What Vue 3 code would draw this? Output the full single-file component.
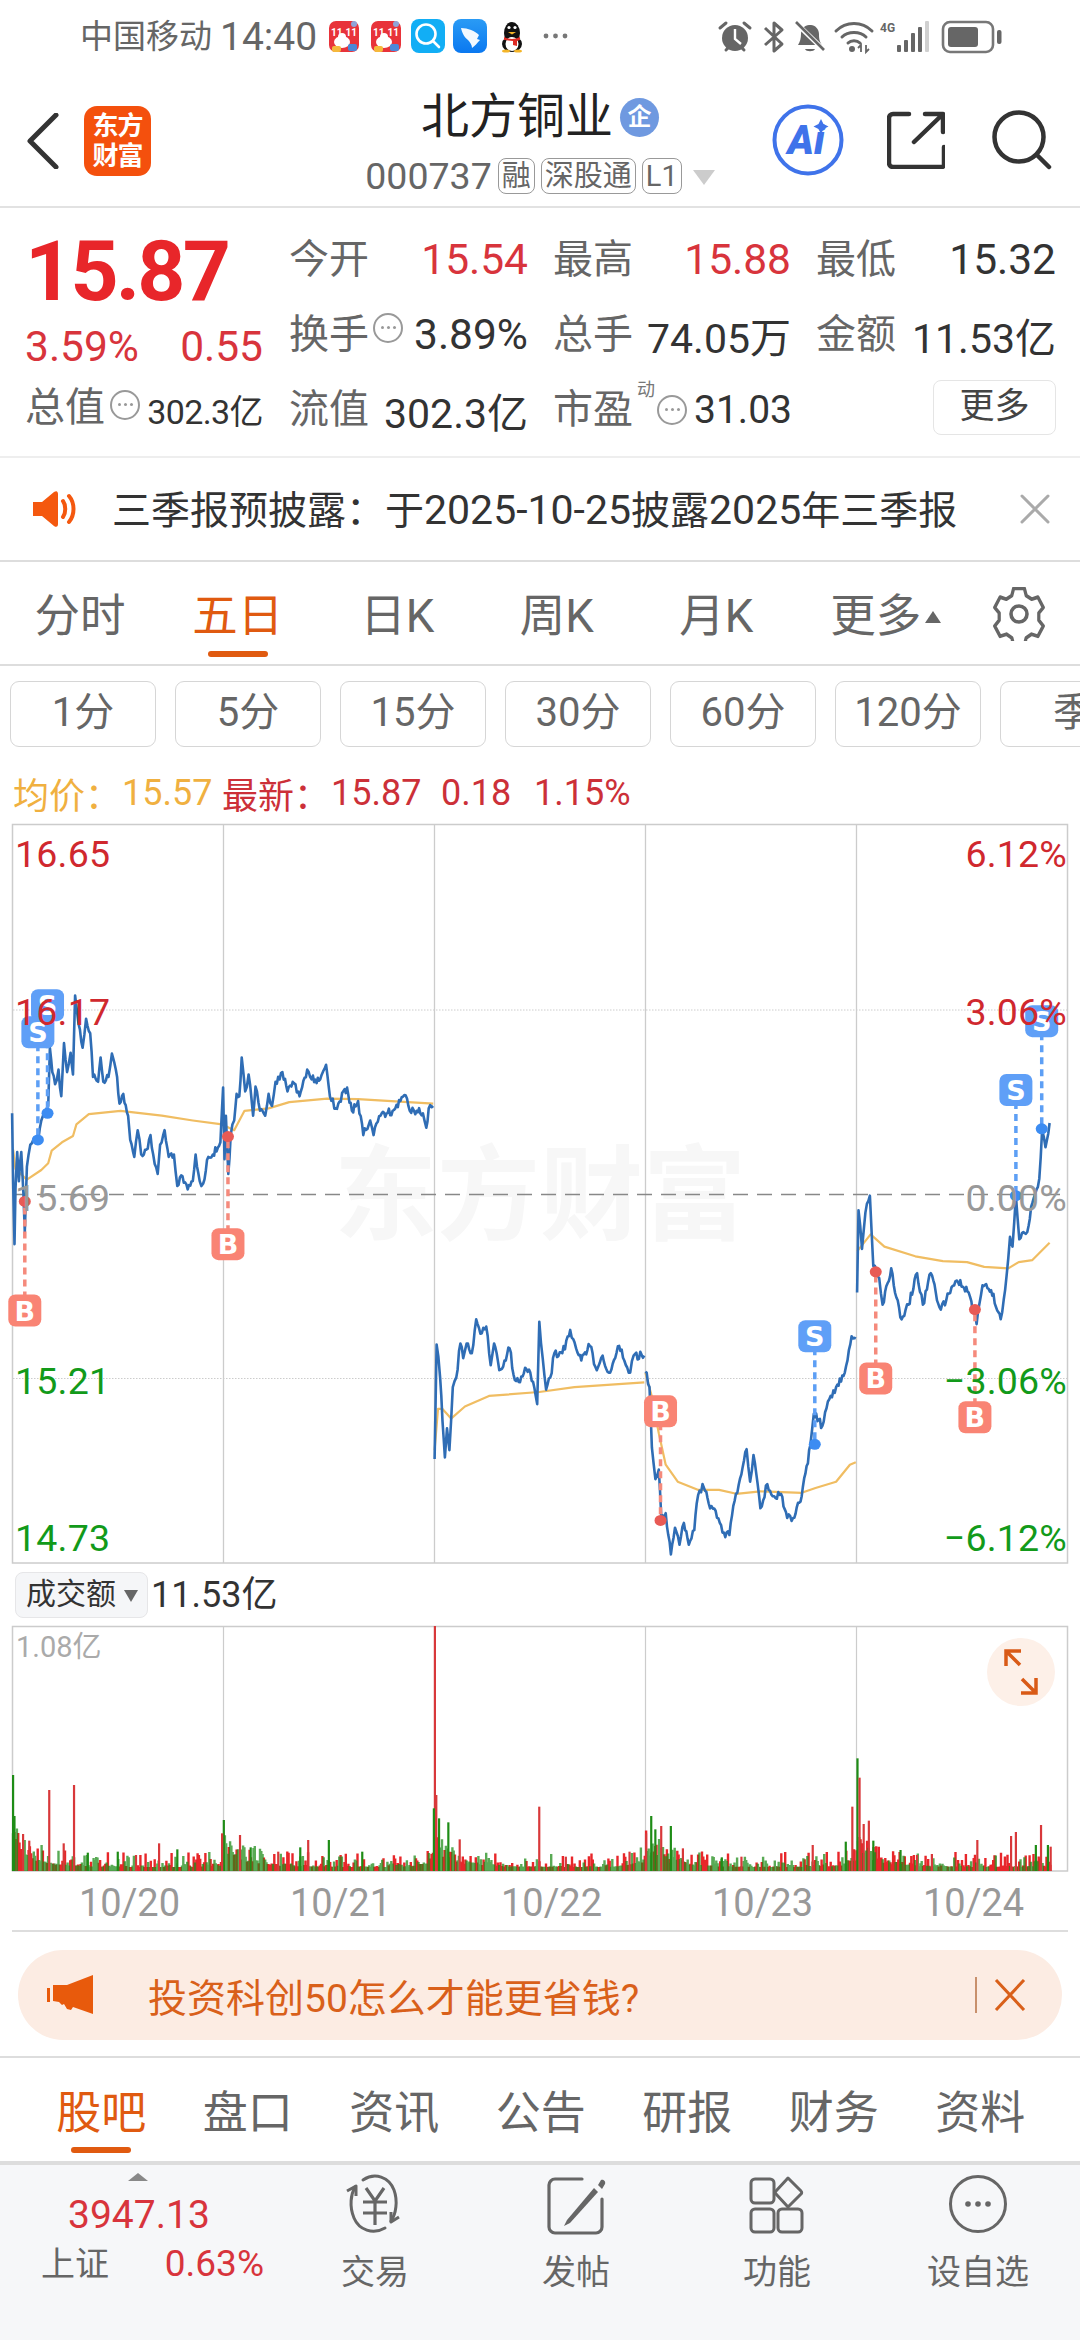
<script setup>
// Scale factors for the hand-plotted chart data (grid units to px)
const SX = 1 / 2.904
const SY = 1 / 2.063
const LEFT = 0
const RIGHT = 540

function seeded(seed) {
  let s = seed
  return () => {
    s = (s * 16807) % 2147483647
    return (s - 1) / 2147483646
  }
}

// Turns plotted anchor points into pixels; `off` is the x origin of the anchors.
function toPx(pts, off) {
  const out = []
  for (let i = 0; i < pts.length; i += 2) {
    out.push([pts[i] * SX + off, 820 + pts[i + 1] * SY])
  }
  return out
}

// Adds tick-level wobble between anchors so the trace reads like intraday data.
function jagged(points, seed, amp) {
  const r = seeded(seed)
  let d = ''
  points.forEach((p, i) => {
    if (i === 0) {
      d += `M${p[0].toFixed(1)} ${p[1].toFixed(1)}`
      return
    }
    const q = points[i - 1]
    const steps = Math.max(1, Math.floor((p[0] - q[0]) / 1.2))
    for (let k = 1; k <= steps; k++) {
      const t = k / steps
      const n = k === steps ? 0 : (r() - 0.5) * amp
      d += `L${(q[0] + (p[0] - q[0]) * t).toFixed(1)} ${(q[1] + (p[1] - q[1]) * t + n).toFixed(1)}`
    }
  })
  return d
}

function smooth(points) {
  return points.map((p, i) => `${i ? 'L' : 'M'}${p[0].toFixed(1)} ${p[1].toFixed(1)}`).join('')
}

const priceDays = [
  toPx([35,605,38,745,42,875,45,760,50,685,55,745,62,685,68,770,72,850,78,715,88,670,100,655,112,655,120,620,130,610,140,590,145,470,152,520,160,545,170,515,178,570,186,460,195,520,205,480,212,525,218,362,228,420,240,470,250,410,262,440,270,530,285,540,292,490,300,540,315,530,325,482,340,530,347,585,358,565,372,610,378,660,390,695,400,640,410,690,425,680,437,650,445,690,458,730,465,670,478,640,490,695,505,690,515,755,530,735,545,762,560,745,568,690,580,745,590,750,605,695,618,690,640,665,648,552,652,700,656,610,663,730,670,650,680,620,687,565,695,570,702,490,712,560,722,525,735,610,742,550,755,600,770,610,780,565,790,590,800,540,820,520,835,560,850,540,870,570,892,515,905,535,930,535,947,505,958,570,975,595,1008,552,1022,600,1040,580,1055,650,1075,620,1085,650,1105,610,1140,600,1178,568,1190,600,1210,600,1228,605,1238,635,1245,595,1258,590], LEFT),
  toPx([1262,1318,1268,1082,1278,1150,1285,1240,1292,1315,1298,1255,1305,1300,1315,1170,1325,1150,1337,1080,1345,1110,1355,1080,1370,1100,1383,1030,1395,1060,1412,1045,1425,1125,1435,1080,1450,1135,1465,1115,1480,1090,1495,1155,1510,1160,1525,1130,1540,1140,1560,1205,1566,1035,1576,1110,1586,1175,1598,1150,1610,1100,1633,1100,1656,1052,1673,1090,1688,1115,1713,1085,1733,1135,1750,1105,1768,1140,1798,1085,1813,1115,1830,1140,1840,1105,1871,1105], LEFT),
  toPx([306,1138,318,1170,325,1295,335,1360,345,1340,352,1435,365,1430,380,1515,392,1460,405,1495,418,1450,432,1495,448,1465,455,1410,472,1370,490,1410,510,1425,530,1470,550,1475,565,1405,585,1350,600,1298,610,1365,620,1310,640,1420,660,1370,680,1395,700,1390,718,1440,735,1440,760,1395,785,1290,795,1225,820,1250,840,1195,860,1170,885,1140,905,1065,917,1070], RIGHT),
  toPx([921,975,925,805,935,885,945,810,958,775,968,920,985,945,995,1000,1020,925,1035,985,1050,1030,1070,1000,1095,935,1112,1000,1135,935,1160,1005,1180,990,1210,950,1245,975,1268,1040,1285,960,1310,970,1338,1030,1355,940,1365,860,1372,880,1382,775,1392,865,1415,850,1430,790,1450,740,1458,640,1468,675,1480,625], RIGHT),
].map((p, i) => jagged(p, 71 + i * 13, 8))

const avgDays = [
  toPx([38,680,45,720,60,730,78,742,120,722,140,708,150,682,180,665,212,652,222,628,258,607,350,600,470,610,560,620,645,628,680,640,710,600,780,595,840,582,950,575,1040,576,1258,585], LEFT),
  toPx([1262,1300,1272,1215,1285,1215,1310,1235,1350,1210,1420,1188,1566,1180,1668,1170,1871,1160], LEFT),
  toPx([306,1140,325,1190,345,1265,365,1330,400,1365,460,1382,520,1382,570,1390,640,1385,760,1388,800,1378,860,1365,900,1330,917,1325], RIGHT),
  toPx([921,890,960,855,1000,880,1090,900,1170,910,1240,912,1290,922,1360,925,1390,912,1430,908,1480,872], RIGHT),
].map(smooth)

// Buy / sell flags: badge centre and the trade point it is pinned to
const flags = [
  { t: 'S', x: 138 * SX, by: 382, dy: 605 },
  { t: 'S', x: 110 * SX, by: 438, dy: 660 },
  { t: 'B', x: 72 * SX, by: 1012, dy: 787 },
  { t: 'B', x: 662 * SX, by: 875, dy: 653 },
  { t: 'B', x: 540 + 350 * SX, by: 1220, dy: 1445 },
  { t: 'S', x: 540 + 798 * SX, by: 1065, dy: 1288 },
  { t: 'B', x: 540 + 975 * SX, by: 1152, dy: 932 },
  { t: 'B', x: 540 + 1263 * SX, by: 1232, dy: 1010 },
  { t: 'S', x: 540 + 1382 * SX, by: 557, dy: 775 },
  { t: 'S', x: 540 + 1457 * SX, by: 415, dy: 637 },
].map(f => ({ ...f, badgeY: 820 + f.by * SY, dotY: 820 + f.dy * SY }))

const gridX = [223.5, 434.5, 645.5, 856.5]
const dayStarts = [13, 224, 435, 646, 857]

// Volume histogram: low random floor, heavier near each session's open and close
const VOL_BOTTOM = 1871
function volumeBars() {
  const r = seeded(4242)
  let red = ''
  let green = ''
  for (let x = 13; x < 1051; x += 1.3) {
    const day = dayStarts.filter(s => s <= x).pop()
    const since = x - day
    const untilEnd = day + 211 - x
    const heat = Math.exp(-since / 20) * 34 + Math.exp(-untilEnd / 9) * 16 * (day > 13 ? 1 : 0.3)
    const h = 4 + Math.pow(r(), 3) * 15 + heat * (0.4 + r() * 0.6)
    const seg = `M${x.toFixed(1)} ${VOL_BOTTOM}V${(VOL_BOTTOM - h).toFixed(1)}`
    if (r() > 0.5) red += seg
    else green += seg
  }
  return { red, green }
}
const volBase = volumeBars()

const spikeAt = (x, v, c) => ({ x, y: 1560 + v / 3, c })
const volSpikes = [
  [38,645,'g'],[42,768,'g'],[143,690,'r'],[215,675,'r'],[650,780,'g'],[645,820,'r'],[697,825,'r'],[895,840,'r'],[955,840,'g'],[1263,198,'r'],[1267,705,'r'],[1260,745,'g'],[1275,775,'g'],[1302,787,'g'],[1335,838,'r'],[462,850,'r'],[342,875,'g'],[515,868,'g'],[185,850,'r'],[67,822,'r'],[85,842,'r'],[1566,740,'r'],[872,862,'g'],[1052,875,'g'],[255,878,'g'],[395,885,'r'],[728,862,'g'],[808,875,'r'],
].map(s => spikeAt(s[0] * SX, s[1], s[2])).concat([
  [308,820,'r'],[323,768,'g'],[335,808,'g'],[352,798,'r'],[380,798,'g'],[415,865,'r'],[792,855,'r'],[907,740,'r'],[922,595,'g'],[928,653,'r'],[955,782,'r'],[940,792,'r'],[968,842,'g'],[1047,870,'g'],[1095,885,'r'],[1138,882,'r'],[1270,840,'r'],[1368,828,'r'],[1382,816,'r'],[1455,795,'r'],[1440,855,'g'],[1475,855,'g'],[1483,860,'r'],[888,845,'g'],[528,892,'g'],[260,875,'r'],[75,890,'r'],[585,890,'r'],
].map(s => spikeAt(540 + s[0] * SX, s[1], s[2])))

const chips = ['1分', '5分', '15分', '30分', '60分', '120分', '季']
const chartTabs = ['分时', '五日', '日K', '周K', '月K']
const dates = ['10/20', '10/21', '10/22', '10/23', '10/24']
const infoTabs = ['股吧', '盘口', '资讯', '公告', '研报', '财务', '资料']
</script>

<template>
  <div class="page">
    <!-- status bar -->
    <div class="status">
      <span class="carrier">中国移动</span>
      <span class="clock">14:40</span>
      <svg class="status-apps" width="245" height="50" viewBox="328 12 245 50">
        <defs>
          <linearGradient id="wing" x1="0" y1="0" x2="0" y2="1">
            <stop offset="0" stop-color="#2a9bf5" />
            <stop offset="1" stop-color="#0a78f0" />
          </linearGradient>
        </defs>
        <g v-for="ox in [329, 371]" :key="ox">
          <rect :x="ox" y="21" width="30" height="31" rx="7" fill="#e8333a" />
          <text :x="ox + 15" y="36" text-anchor="middle" class="app-mark">11.11</text>
          <ellipse :cx="ox + 13" cy="42" rx="8" ry="6" fill="#fff" />
          <circle :cx="ox + 13" cy="37" r="4" fill="#fff" />
          <rect :x="ox + 3" y="46" width="9" height="6" rx="2" fill="#f5b93c" />
          <rect :x="ox + 19" y="44" width="9" height="7" rx="2" fill="#4a88d8" />
          <circle :cx="ox + 25" cy="24" r="3" fill="#8fa4d8" />
        </g>
        <rect x="411" y="19" width="34" height="34" rx="8" fill="#12aef5" />
        <circle cx="426" cy="34" r="9.5" fill="none" stroke="#fff" stroke-width="2.6" />
        <path d="M433 41l6 6" stroke="#fff" stroke-width="2.6" stroke-linecap="round" />
        <rect x="453" y="19" width="34" height="34" rx="8" fill="url(#wing)" />
        <path d="M461 28c7 0 14 3 18 7l-2 4 3 1c-3 3-5 6-8 8 0-3-2-6-4-8-3-2-6-7-7-12z" fill="#fff" opacity=".95" />
        <ellipse cx="512" cy="33" rx="8" ry="11" fill="#111" />
        <ellipse cx="512" cy="44" rx="10" ry="8" fill="#111" />
        <ellipse cx="512" cy="44" rx="6.5" ry="7" fill="#fff" />
        <path d="M504 37c5 2.5 11 2.5 16 0v3l-3 1v5l-4-1v-4c-4 0-7-1-9-1z" fill="#dd2b24" />
        <path d="M508 32h8l-4 2.5z" fill="#f4b528" />
        <circle cx="509" cy="27.5" r="1.6" fill="#fff" />
        <circle cx="515" cy="27.5" r="1.6" fill="#fff" />
        <ellipse cx="506" cy="51" rx="4" ry="1.6" fill="#f4b528" />
        <ellipse cx="518" cy="51" rx="4" ry="1.6" fill="#f4b528" />
        <circle cx="546" cy="36" r="2.4" fill="#777" />
        <circle cx="555.5" cy="36" r="2.4" fill="#777" />
        <circle cx="565" cy="36" r="2.4" fill="#777" />
      </svg>
      <svg class="status-sys" width="290" height="50" viewBox="715 12 290 50">
        <!-- alarm -->
        <circle cx="735" cy="38" r="13" fill="#666" />
        <path d="M735 29v10l6 5" fill="none" stroke="#fff" stroke-width="2.4" />
        <path d="M720 28l6-5M750 28l-6-5M726 50l3-3M744 50l-3-3" stroke="#666" stroke-width="3" stroke-linecap="round" />
        <!-- bluetooth -->
        <path d="M765 28l17 16-8 7V23l8 7-17 15" fill="none" stroke="#666" stroke-width="3" stroke-linejoin="round" />
        <!-- muted bell -->
        <path d="M798 45h24c-3-4-3-8-3-11 0-5-4-9-8-9h-2c-4 0-8 4-8 9 0 4-1 8-3 11z" fill="#666" />
        <path d="M805 49h10c-1 3-9 3-10 0z" fill="#666" />
        <path d="M796 23l29 28" stroke="#fff" stroke-width="5" />
        <path d="M796 22l28 28" stroke="#666" stroke-width="2.6" />
        <!-- wifi -->
        <path d="M836 31c10-10 26-10 36 0M842 37c6-6 18-6 24 0M848 43c3-3 9-3 12 0" fill="none" stroke="#666" stroke-width="3" stroke-linecap="round" />
        <circle cx="852" cy="49" r="3" fill="#666" />
        <path d="M861 52v-7l-3 3M866 45v7l3-3" fill="none" stroke="#666" stroke-width="1.8" />
        <!-- signal -->
        <text x="880" y="32" class="net">4G</text>
        <rect x="897" y="45" width="4" height="7" rx="1" fill="#666" />
        <rect x="904" y="40" width="4" height="12" rx="1" fill="#666" />
        <rect x="911" y="33" width="4" height="19" rx="1" fill="#666" />
        <rect x="918" y="27" width="4" height="25" rx="1" fill="#666" />
        <rect x="925" y="21" width="4" height="31" rx="1" fill="#d0d0d0" />
        <!-- battery -->
        <rect x="943" y="22" width="50" height="30" rx="7" fill="none" stroke="#777" stroke-width="2.6" />
        <rect x="948" y="27" width="30" height="20" rx="3" fill="#666" />
        <rect x="997" y="30" width="4.5" height="14" rx="2" fill="#666" />
      </svg>
    </div>

    <!-- stock title bar -->
    <header class="nav">
      <div class="nav-left">
        <svg class="back" width="32" height="56" viewBox="0 0 32 56"><path d="M29 2L3 28l26 26" fill="none" stroke="#333" stroke-width="5" stroke-linecap="round" stroke-linejoin="round" /></svg>
        <div class="logo"><span>东方</span><span>财富</span></div>
      </div>
      <div class="nav-mid">
        <div class="title-row">
          <span class="title">北方铜业</span>
          <span class="ent">企</span>
        </div>
        <div class="code-row">
          <span class="code">000737</span>
          <span class="tag">融</span>
          <span class="tag">深股通</span>
          <span class="tag">L1</span>
          <i class="caret"></i>
        </div>
      </div>
      <div class="nav-right">
        <svg width="72" height="72" viewBox="0 0 72 72">
          <circle cx="36" cy="36" r="33.5" fill="none" stroke="#3f73ea" stroke-width="4" />
          <text x="34" y="50" text-anchor="middle" class="ai">Ai</text>
          <path d="M49 15l2.5 5 5 2.500-5 2.500-2.500 5-2.500-5-5-2.500 5-2.500z" fill="#3f73ea" />
        </svg>
        <svg class="ic-share" width="58" height="58" viewBox="0 0 58 58" fill="none" stroke="#333" stroke-width="4.500" stroke-linecap="round" stroke-linejoin="round">
          <path d="M22 3H6a4 4 0 0 0-4 4v45a4 4 0 0 0 4 4h49a2 2 0 0 0 2-2V36" />
          <path d="M27 31L55 4M38 3h18v18" />
        </svg>
        <svg class="ic-search" width="60" height="60" viewBox="0 0 60 60" fill="none" stroke="#333" stroke-width="4.500" stroke-linecap="round">
          <circle cx="27" cy="27" r="24.500" />
          <path d="M45 45l12 12" />
        </svg>
      </div>
    </header>

    <!-- quote summary -->
    <section class="quote">
      <div class="q-left">
        <div class="price">15.87</div>
        <div class="change"><span>3.59%</span><span>0.55</span></div>
        <div class="cap"><span class="lab">总值</span><i class="more-dot"><b></b></i><span class="cap-val">302.3亿</span></div>
      </div>
      <div class="q-grid">
        <div class="cell"><span class="lab">今开</span><span class="val up">15.54</span></div>
        <div class="cell"><span class="lab">最高</span><span class="val up">15.88</span></div>
        <div class="cell"><span class="lab">最低</span><span class="val">15.32</span></div>
        <div class="cell"><span class="lab">换手</span><i class="more-dot lift"><b></b></i><span class="val">3.89%</span></div>
        <div class="cell"><span class="lab">总手</span><span class="val unit">74.05万</span></div>
        <div class="cell"><span class="lab">金额</span><span class="val unit">11.53亿</span></div>
        <div class="cell"><span class="lab">流值</span><span class="val unit">302.3亿</span></div>
        <div class="cell"><span class="lab">市盈<sup>动</sup></span><i class="more-dot pe"><b></b></i><span class="val small">31.03</span></div>
        <div class="cell end"><span class="more-btn">更多</span></div>
      </div>
    </section>

    <!-- announcement -->
    <div class="notice">
      <svg width="46" height="36" viewBox="0 0 46 36" fill="#f4580f">
        <path d="M0 11h9L21 1c3-2 4 0 4 2v30c0 2-1 4-4 2L9 25H0z" />
        <path d="M30 10c3 4 3 12 0 16M36 5c6 7 6 19 0 26" fill="none" stroke="#f4580f" stroke-width="4" stroke-linecap="round" />
      </svg>
      <span class="notice-text">三季报预披露：于<span class="num">2025-10-25</span>披露<span class="num">2025</span>年三季报</span>
      <svg class="notice-x" width="30" height="30" viewBox="0 0 30 30"><path d="M2 2l26 26M28 2L2 28" stroke="#aaa" stroke-width="3" stroke-linecap="round" /></svg>
    </div>

    <!-- period tabs -->
    <nav class="period">
      <div v-for="(t, i) in chartTabs" :key="t" class="ptab" :class="{ on: i === 1 }">
        <span>{{ t }}</span><i></i>
      </div>
      <div class="ptab"><span class="more-tab">更多<em></em></span><i></i></div>
      <div class="ptab gear">
        <svg width="54" height="54" viewBox="0 0 54 54" fill="none" stroke="#666" stroke-width="3.600" stroke-linejoin="round">
          <path d="M21 3h12l2 7 6 3.500 7-2 6 10-5 5.500v7l5 5.500-6 10-7-2-6 3.500-2 7H21l-2-7-6-3.500-7 2-6-10 5-5.500v-7L0 21.500l6-10 7 2L19 10z" transform="translate(2.700 -1.700) scale(.9 1.03)" />
          <circle cx="27" cy="27" r="8" />
        </svg>
      </div>
    </nav>

    <div class="chips">
      <span v-for="c in chips" :key="c" class="chip">{{ c }}</span>
    </div>

    <div class="legend">
      <span class="gold l1">均价：</span><span class="gold l2">15.57</span>
      <span class="red l3">最新：</span><span class="red l4">15.87</span>
      <span class="red l5">0.18</span><span class="red l6">1.15%</span>
    </div>

    <!-- price chart -->
    <svg class="chart" width="1080" height="748" viewBox="0 820 1080 748">
      <text x="540" y="1232" text-anchor="middle" class="mark">东方财富</text>
      <rect x="12.500" y="824.500" width="1055" height="738.500" fill="none" stroke="#ccc" stroke-width="1.500" />
      <path v-for="x in gridX" :key="x" :d="`M${x} 825V1563`" stroke="#ccc" stroke-width="1.300" />
      <path d="M13 1010H1067M13 1378.500H1067" stroke="#ccc" stroke-width="1" stroke-dasharray="1.500 1.500" />
      <path d="M13 1194.500H1067" stroke="#888" stroke-width="1.600" stroke-dasharray="15 9" />
      <path v-for="(d, i) in avgDays" :key="'a' + i" :d="d" class="avg" />
      <path v-for="(d, i) in priceDays" :key="'p' + i" :d="d" class="line" />
      <g v-for="(f, i) in flags" :key="'f' + i">
        <path :d="`M${f.x} ${f.badgeY}V${f.dotY}`" :stroke="f.t === 'B' ? '#f58a7c' : '#5d9ff5'" stroke-width="3.500" stroke-dasharray="7 5" />
        <ellipse :cx="f.x" :cy="f.dotY" rx="6" ry="5.500" :fill="f.t === 'B' ? '#e85a55' : '#3c8cf2'" />
        <rect :x="f.x - 16.500" :y="f.badgeY - 16" width="33" height="32" rx="7" :fill="f.t === 'B' ? '#f98474' : '#5f9ff7'" />
        <text :x="f.x" :y="f.badgeY + 10" text-anchor="middle" class="flag">{{ f.t }}</text>
      </g>
      <text x="15" y="867" class="axis" fill="#d0282e">16.65</text>
      <text x="15" y="1025" class="axis" fill="#d0282e">16.17</text>
      <text x="15" y="1211" class="axis" fill="#999">15.69</text>
      <text x="15" y="1394" class="axis" fill="#129a1a">15.21</text>
      <text x="15" y="1551" class="axis" fill="#129a1a">14.73</text>
      <text x="1067" y="867" text-anchor="end" class="axis" fill="#d0282e">6.12%</text>
      <text x="1067" y="1025" text-anchor="end" class="axis" fill="#d0282e">3.06%</text>
      <text x="1067" y="1211" text-anchor="end" class="axis" fill="#999">0.00%</text>
      <text x="1067" y="1394" text-anchor="end" class="axis" fill="#129a1a">−3.06%</text>
      <text x="1067" y="1551" text-anchor="end" class="axis" fill="#129a1a">−6.12%</text>
    </svg>

    <!-- turnover -->
    <div class="vol-head">
      <span class="vol-chip">成交额<i></i></span>
      <span class="vol-total">11.53亿</span>
    </div>
    <svg class="vol" width="1080" height="254" viewBox="0 1622 1080 254">
      <rect x="12.500" y="1626.500" width="1055" height="244.500" fill="none" stroke="#ccc" stroke-width="1.500" />
      <path v-for="x in gridX" :key="x" :d="`M${x} 1626V1871`" stroke="#ccc" stroke-width="1.200" />
      <text x="16" y="1657" class="vol-max">1.08亿</text>
      <path :d="volBase.red" stroke="#e8262a" stroke-width="2.400" />
      <path :d="volBase.green" stroke="#1a8a14" stroke-width="2.400" opacity=".72" />
      <path v-for="(s, i) in volSpikes" :key="'s' + i" :d="`M${s.x} 1871V${s.y}`" :stroke="s.c === 'r' ? '#d8383a' : '#1e8c16'" stroke-width="2.200" />
      <circle cx="1021" cy="1672" r="34" fill="#fdf0e8" />
      <path d="M1006 1666v-15h15M1007 1652l13 13M1036 1678v15h-15M1035 1692l-13-13" fill="none" stroke="#d95a16" stroke-width="3.500" />
    </svg>
    <div class="dates">
      <span v-for="d in dates" :key="d">{{ d }}</span>
    </div>

    <!-- promotion -->
    <div class="promo-wrap">
      <div class="promo">
        <svg width="48" height="40" viewBox="0 0 48 40" fill="#e85a0c">
          <rect x="0" y="13" width="3" height="14" />
          <path d="M6 10h14L46 0v39l-20-7-2 3-4-1-3-5-2 1-3-3-6-1z" />
        </svg>
        <span class="promo-text">投资科创50怎么才能更省钱?</span>
        <i class="promo-bar"></i>
        <svg width="32" height="32" viewBox="0 0 32 32"><path d="M2 1l28 30M30 1L2 31" stroke="#d9601a" stroke-width="3" /></svg>
      </div>
    </div>

    <!-- content tabs -->
    <nav class="itabs">
      <div v-for="(t, i) in infoTabs" :key="t" class="itab" :class="{ on: i === 0 }">
        <span>{{ t }}</span><i></i>
      </div>
    </nav>

    <!-- bottom action bar -->
    <footer class="bar">
      <div class="index">
        <i class="idx-up"></i>
        <div class="idx-val">3947.13</div>
        <div class="idx-row"><span>上证</span><span class="idx-pct">0.63%</span></div>
      </div>
      <div class="act">
        <svg width="68" height="64" viewBox="0 0 68 64" fill="none" stroke="#666" stroke-width="3">
          <path d="M22 8c12-8 26-3 31 10 4 11 2 24-3 31" stroke-linecap="round" />
          <path d="M50 40l0 10 8-5" stroke-width="3" stroke-linejoin="round" />
          <path d="M44 56c-12 7-26 2-31-10-5-12-3-24 1-31" stroke-linecap="round" />
          <path d="M6 19l9-5 0 10" stroke-width="3" stroke-linejoin="round" />
          <path d="M25 16l9 13 9-13M22 30h24M22 41h24M34 29v24" stroke-width="3.200" />
        </svg>
        <span>交易</span>
      </div>
      <div class="act">
        <svg width="60" height="64" viewBox="0 0 60 64" fill="none" stroke="#666" stroke-width="3.200">
          <path d="M36 7H9a6 6 0 0 0-6 6v42a6 6 0 0 0 6 6h41a6 6 0 0 0 6-6V27" stroke-linecap="round" />
          <path d="M48 16L21 48l-3 6 6-3L52 20z" fill="#666" stroke="none" />
          <path d="M52 13l3-5c2-1 5 1 4 4l-3 5z" fill="#666" stroke="none" />
        </svg>
        <span>发帖</span>
      </div>
      <div class="act">
        <svg width="56" height="64" viewBox="0 0 56 64" fill="none" stroke="#666" stroke-width="3">
          <rect x="2" y="7" width="23" height="24" rx="4" />
          <path d="M39 6l13 13a2 2 0 0 1 0 3L39 35 27 22a2 2 0 0 1 0-3z" stroke-linejoin="round" />
          <rect x="2" y="37" width="23" height="23" rx="4" />
          <rect x="29" y="37" width="24" height="23" rx="4" />
        </svg>
        <span>功能</span>
      </div>
      <div class="act">
        <svg width="60" height="64" viewBox="0 0 60 64" fill="none" stroke="#666" stroke-width="3">
          <circle cx="30" cy="32" r="27.500" />
          <circle cx="20" cy="32" r="2.800" fill="#666" stroke="none" />
          <circle cx="30" cy="32" r="2.800" fill="#666" stroke="none" />
          <circle cx="40" cy="32" r="2.800" fill="#666" stroke="none" />
        </svg>
        <span>设自选</span>
      </div>
    </footer>
  </div>
</template>

<style>
html, body { background: #fff; }
</style>

<style scoped>
.page {
  width: 1080px;
  height: 2340px;
  overflow: hidden;
  background: #fff;
  font-family: Roboto, "Noto Sans CJK SC", sans-serif;
  color: #333;
  display: flex;
  flex-direction: column;
}
svg { display: block; flex: none; }
i { display: block; font-style: normal; }

/* status bar */
.status { height: 74px; display: flex; align-items: center; padding-left: 80px; color: #666; flex: none; }
.carrier { font-size: 33px; line-height: 40px; }
.clock { font-size: 39px; line-height: 40px; margin-left: 8px; width: 98px; }
.status-apps { margin-left: 10px; }
.status-sys { margin-left: 142px; }
.app-mark { font: 700 10px Roboto, sans-serif; fill: #fff; }
.net { font: 700 12px Roboto, sans-serif; fill: #666; }

/* title bar */
.nav { height: 134px; flex: none; display: grid; grid-template-columns: 1fr auto 1fr; border-bottom: 2px solid #e2e2e2; box-sizing: border-box; }
.nav-left { display: flex; align-items: center; padding-left: 27px; }
.back { margin-top: 1px; }
.logo { width: 67px; height: 70px; margin-left: 25px; margin-top: 1px; background: #f4500d; border-radius: 13px; color: #fff; font-size: 26px; line-height: 30px; font-weight: 700; display: flex; flex-direction: column; align-items: center; justify-content: center; letter-spacing: -1px; }
.nav-mid { display: flex; flex-direction: column; align-items: center; padding-top: 19px; }
.title-row { display: flex; align-items: center; height: 48px; }
.title { font-size: 48px; line-height: 48px; color: #222; }
.ent { width: 39px; height: 39px; margin-left: 7px; border-radius: 50%; background: #6f99e0; color: #fff; font-size: 24px; line-height: 39px; text-align: center; font-weight: 700; }
.code-row { display: flex; align-items: center; margin-top: 16px; height: 38px; color: #666; }
.code { font-size: 37.500px; line-height: 38px; }
.tag { border: 1.500px solid #999; border-radius: 8px; height: 36px; line-height: 34px; font-size: 29px; padding: 0 3px; margin-left: 6px; box-sizing: border-box; }
.caret { width: 0; height: 0; margin-left: 11px; border-left: 11px solid transparent; border-right: 11px solid transparent; border-top: 15px solid #ccc; margin-top: 2px; }
.nav-right { display: flex; align-items: center; justify-content: flex-end; padding-right: 28px; }
.ic-share { margin-left: 43px; }
.ic-search { margin-left: 47px; }
.ai { font: italic 900 40px Roboto, sans-serif; fill: #3f73ea; }

/* quote */
.quote { height: 250px; flex: none; box-sizing: border-box; border-bottom: 2px solid #eee; display: flex; padding-top: 14px; }
.q-left { width: 289px; flex: none; padding-left: 25px; box-sizing: border-box; }
.price { height: 100px; line-height: 100px; font-size: 84px; font-weight: 700; color: #e8262a; letter-spacing: -2.800px; }
.change { height: 48px; width: 238px; display: flex; justify-content: space-between; align-items: center; color: #d8343c; font-size: 42.500px; }
.cap { height: 76px; width: 238px; display: flex; align-items: center; }
.cap-val { font-size: 34px; margin-left: auto; margin-top: 2px; color: #333; white-space: nowrap; letter-spacing: -.6px; }
.lab { font-size: 40px; color: #666; line-height: 50px; position: relative; white-space: nowrap; }
.lab sup { position: absolute; left: 84px; top: -5px; font-size: 18px; line-height: 20px; color: #777; }
.q-grid { display: grid; grid-template-columns: 239px 238px 240px; grid-auto-rows: 75px; column-gap: 25px; }
.cell { display: flex; align-items: center; justify-content: space-between; }
.cell.end { justify-content: flex-end; }
.val { font-size: 42.500px; color: #333; white-space: nowrap; }
.val.unit { font-size: 41px; }
.val.small { font-size: 39px; margin-right: -1px; }
.up { color: #d8343c; }
.more-dot { width: 30px; height: 30px; flex: none; border: 2px solid #999; border-radius: 50%; box-sizing: border-box; position: relative; margin-left: 5px; margin-top: -6px; }
.more-dot.lift { margin-top: -14px; margin-left: 4px; }
.more-dot.pe { margin-left: 24px; margin-top: 0; }
.more-dot b { position: absolute; left: 6px; top: 11px; width: 3px; height: 3px; border-radius: 50%; background: #999; box-shadow: 6px 0 #999, 12px 0 #999; }
.cell .more-dot { margin-right: auto; }
.more-btn { width: 123px; height: 55px; border: 1.500px solid #e5e5e5; border-radius: 8px; box-sizing: border-box; text-align: center; line-height: 52px; font-size: 35px; color: #444; margin-top: -4px; }

/* notice */
.notice { height: 104px; flex: none; box-sizing: border-box; border-bottom: 2px solid #ddd; display: flex; align-items: center; padding-left: 33px; }
.notice-text { font-size: 39px; color: #333; margin: -4px 0 0 33px; white-space: nowrap; flex: none; width: 908px; }
.num { font-size: 41px; }

/* period tabs */
.period { height: 104px; flex: none; box-sizing: border-box; border-bottom: 2px solid #ddd; display: grid; grid-template-columns: 156px repeat(5, 159.500px) 1fr; padding: 25px 0 0 2px; }
.ptab { display: flex; flex-direction: column; align-items: center; font-size: 45.500px; line-height: 60px; color: #666; }
.ptab i { width: 60px; height: 6px; margin-top: 4px; border-radius: 3px; }
.ptab.on { color: #e05a10; }
.ptab.on i { background: #e05a10; }
.more-tab { position: relative; }
.more-tab em { position: absolute; left: 95px; top: 24px; width: 0; height: 0; border-left: 8px solid transparent; border-right: 8px solid transparent; border-bottom: 12px solid #666; }
.gear { padding-left: 3px; }

.chips { height: 99px; flex: none; box-sizing: border-box; display: flex; gap: 19px; padding: 15px 0 0 10px; }
.chip { width: 146px; height: 66px; flex: none; box-sizing: border-box; border: 1.500px solid #d6d6d6; border-radius: 9px; text-align: center; line-height: 62px; font-size: 40px; color: #666; }

.legend { height: 55px; flex: none; display: flex; align-items: center; font-size: 36px; white-space: nowrap; padding-left: 13px; }
.gold { color: #f0b040; }
.red { color: #cc3038; }
.l1 { width: 109px; }
.l2 { width: 100px; }
.l3 { width: 109px; }
.l4 { width: 110px; }
.l5 { width: 93px; }

/* charts */
.line { fill: none; stroke: #2f6db5; stroke-width: 2.600; stroke-linejoin: round; }
.avg { fill: none; stroke: #f0bd62; stroke-width: 2.200; stroke-linejoin: round; }
.axis { font: 37.500px Roboto, sans-serif; letter-spacing: .2px; }
.flag { font: 700 27px "DejaVu Sans", sans-serif; fill: #fff; }
.mark { font: 700 103px "Noto Sans CJK SC", sans-serif; fill: #f7f7f7; }
.vol-head { height: 54px; flex: none; box-sizing: border-box; display: flex; align-items: flex-start; padding: 4px 0 0 15px; }
.vol-chip { width: 133px; height: 46px; box-sizing: border-box; background: #f5f6f8; border: 1.500px solid #e6e6e8; border-radius: 8px; font-size: 30px; line-height: 42px; padding-left: 10px; color: #333; position: relative; }
.vol-chip i { position: absolute; right: 9px; top: 17px; width: 0; height: 0; border-left: 7.500px solid transparent; border-right: 7.500px solid transparent; border-top: 12px solid #666; }
.vol-total { font-size: 36px; line-height: 46px; margin-left: 3px; color: #333; }
.vol-max { font: 29px Roboto, "Noto Sans CJK SC", sans-serif; fill: #aaa; }
.dates { height: 56px; flex: none; box-sizing: border-box; margin: 0 12px; border-bottom: 2px solid #ddd; display: grid; grid-template-columns: repeat(5, 211px); padding-left: 12px; width: 1056px; }
.dates span { text-align: center; font-size: 38px; line-height: 55px; color: #999; }

/* promotion */
.promo-wrap { height: 126px; flex: none; box-sizing: border-box; border-bottom: 2px solid #ddd; padding: 18px 18px 0; }
.promo { height: 90px; border-radius: 45px; background: #fcece3; display: flex; align-items: center; padding-left: 29px; }
.promo-text { font-size: 39px; color: #d9601a; margin-left: 53px; width: 824px; white-space: nowrap; flex: none; }
.promo-bar { width: 1.500px; height: 36px; background: #c8906c; flex: none; margin-right: 17px; margin-left: 3px; }

/* content tabs */
.itabs { height: 105px; flex: none; box-sizing: border-box; border-bottom: 2px solid #ddd; display: grid; grid-template-columns: repeat(7, 146.500px); padding: 26px 0 0 28px; }
.itab { display: flex; flex-direction: column; align-items: center; font-size: 45px; line-height: 60px; color: #666; }
.itab i { width: 60px; height: 6px; margin-top: 3px; border-radius: 3px; }
.itab.on { color: #e05a10; }
.itab.on i { background: #e05a10; }

/* action bar */
.bar { flex: 1; background: #f6f7f9; border-top: 2px solid #ddd; display: grid; grid-template-columns: 274.500px repeat(4, 201px); }
.index { position: relative; padding: 8px 0 0 41px; }
.idx-up { width: 0; height: 0; margin-left: 87px; border-left: 10px solid transparent; border-right: 10px solid transparent; border-bottom: 8px solid #888; }
.idx-val { margin: 9px 0 0 27px; font-size: 39px; line-height: 50px; color: #d8343c; }
.idx-row { display: flex; align-items: center; width: 223px; justify-content: space-between; font-size: 34px; line-height: 48px; color: #666; }
.idx-pct { color: #d8343c; font-size: 37px; }
.act { display: flex; flex-direction: column; align-items: center; padding-top: 7px; color: #666; font-size: 34px; line-height: 40px; }
.act span { margin-top: 16px; }
</style>
